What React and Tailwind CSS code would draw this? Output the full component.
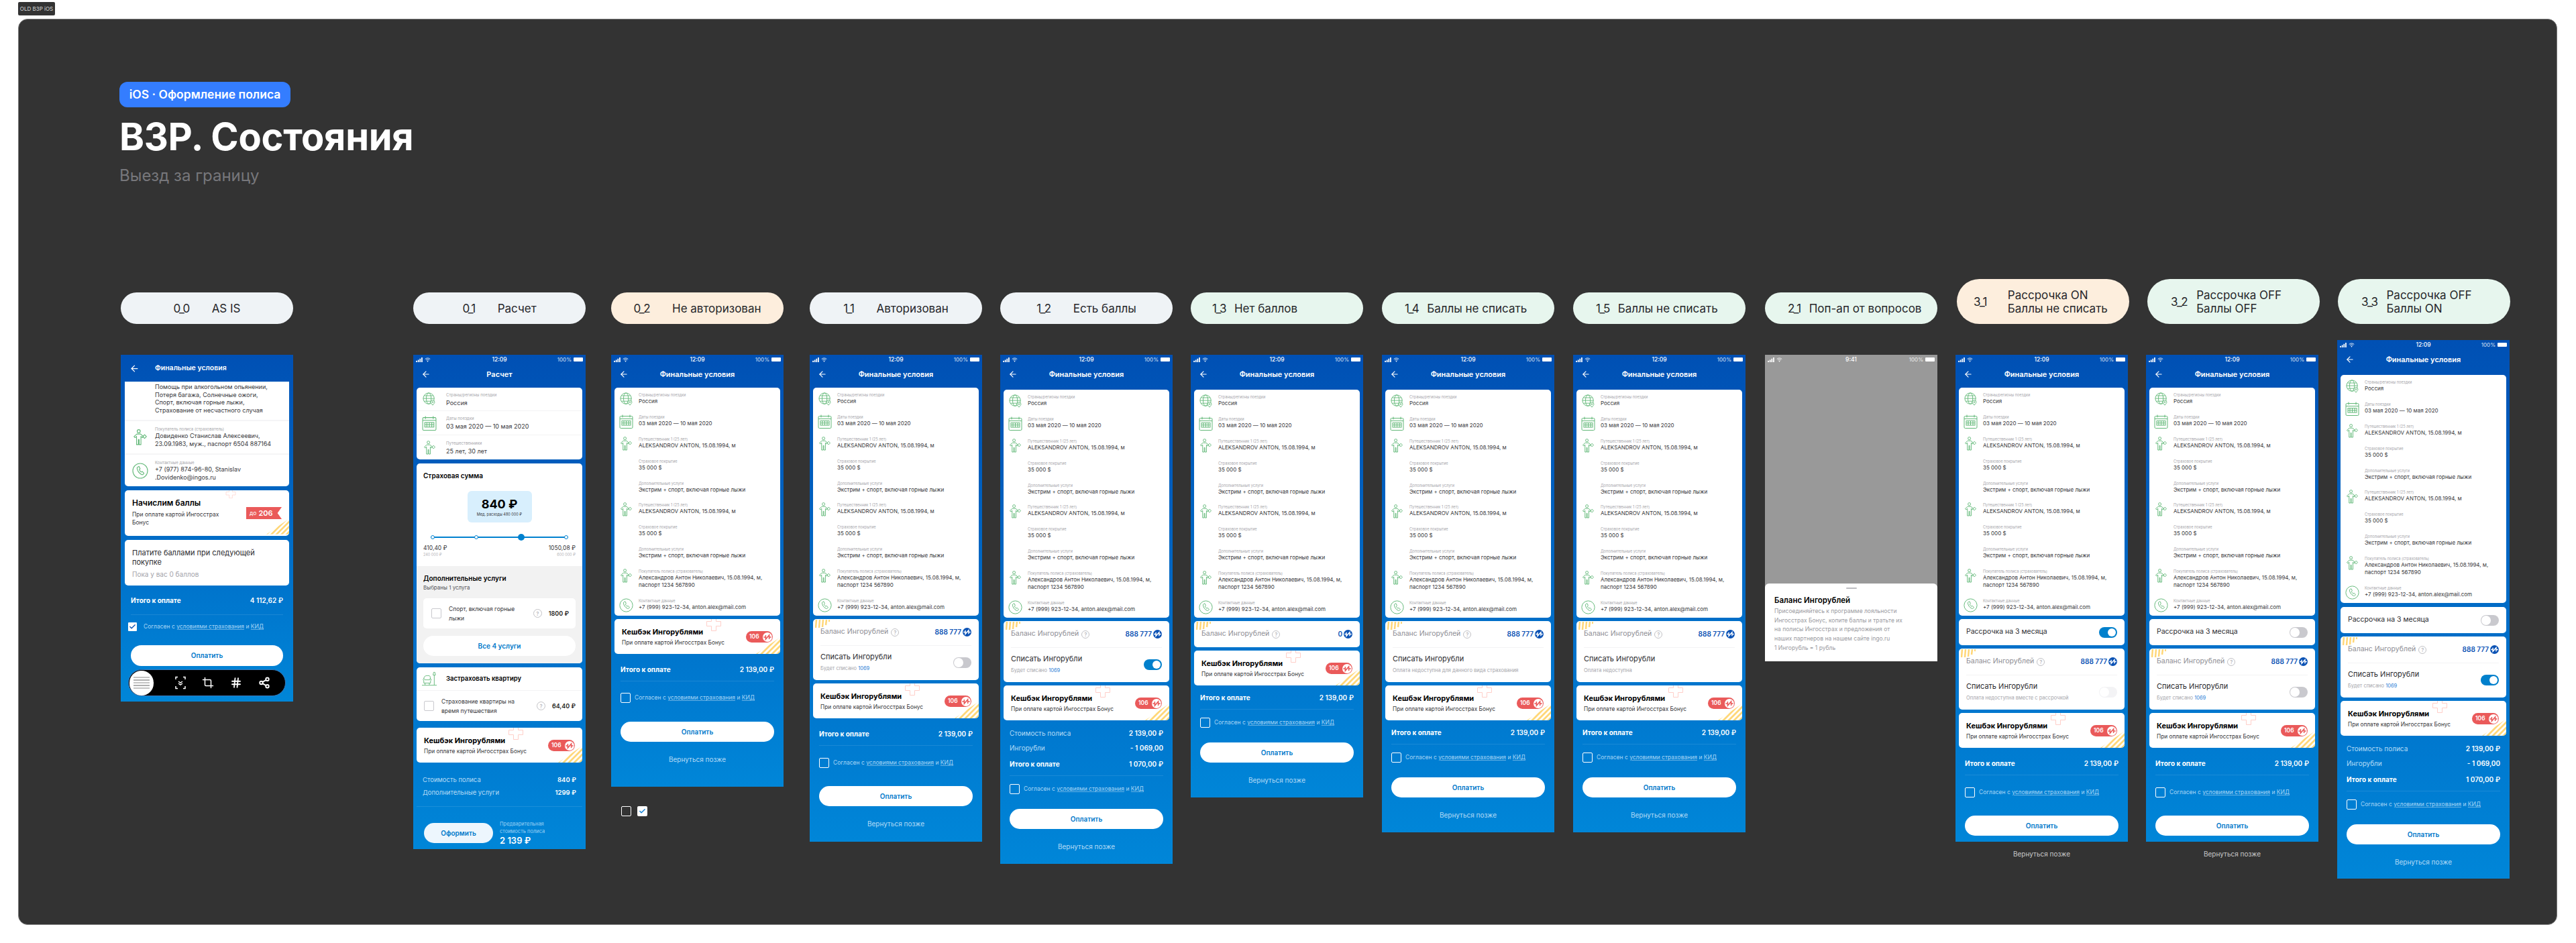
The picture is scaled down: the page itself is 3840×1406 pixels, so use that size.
import { useId } from 'react';
import { ArrowLeft, Check, Crop, Hash, Share2 } from 'lucide-react';

const traveller = [
  { label: 'Путешественник 1 (25 лет)', value: 'ALEKSANDROV ANTON, 15.08.1994, м', icon: 'person' },
  { label: 'Страховое покрытие', value: '35 000 $' },
  { label: 'Дополнительные услуги', value: 'Экстрим + спорт, включая горные лыжи' },
];

const detailRows = [
  { label: 'Страны/регионы поездки', value: 'Россия', icon: 'globe' },
  { label: 'Даты поездки', value: '03 мая 2020 — 10 мая 2020', icon: 'calendar' },
  ...traveller,
  ...traveller,
];

function GlobeIcon({ className }) {
  return (
    <svg viewBox="0 0 22 22" fill="none" stroke="#62b878" strokeWidth="1" className={className}>
      <circle cx="10" cy="10" r="9" />
      <ellipse cx="10" cy="10" rx="4" ry="9" />
      <path d="M1 10h18M2.5 5.5h15M2.5 14.5h11" />
      <path d="M16.5 21c-2-2.2-3.2-3.6-3.2-5a3.2 3.2 0 0 1 6.4 0c0 1.4-1.2 2.8-3.2 5z" fill="#fff" />
      <circle cx="16.5" cy="16" r="1" />
    </svg>
  );
}

function CalendarIcon({ className }) {
  return (
    <svg viewBox="0 0 20 21" fill="none" stroke="#62b878" strokeWidth="1" className={className}>
      <rect x="0.5" y="2.5" width="19" height="18" rx="1.5" />
      <path d="M4.5 0.5v4M15.5 0.5v4M0.5 6.5h19" />
      <rect x="3.5" y="9.5" width="13" height="6.5" />
      <path d="M6.5 9.5v6.5M10 9.5v6.5M13.5 9.5v6.5M3.5 12.7h13" />
    </svg>
  );
}

function PersonIcon({ className }) {
  return (
    <svg viewBox="0 0 20 22" fill="none" stroke="#62b878" strokeWidth="1" strokeLinejoin="round" className={className}>
      <circle cx="8" cy="2.700" r="2.100" />
      <path d="M5.500 6.500H10.500L14.500 10L13 11.500L11 9.700V21H8.500V14H7.500V21H5V9.700L3 11.500L1.500 10Z" />
      <path d="M16 7.500L18.500 10L16 12.500L13.500 10Z" />
    </svg>
  );
}

function PhoneIcon({ className }) {
  return (
    <svg viewBox="0 0 24 24" fill="none" stroke="#62b878" strokeWidth="1.1" className={className}>
      <circle cx="12" cy="12" r="11" />
      <path d="M8.5 6.2l1.7-.7 1.7 3.4-1.2 1.2c.5 1.6 1.4 2.8 3 3.8l1.3-1 2.6 2.6-1.2 1.6c-.6.7-1.6.8-2.5.3-3.6-1.9-6-5-6.6-9.200-.1-.9.4-1.700 1.200-2z" />
    </svg>
  );
}

function ChairIcon({ className }) {
  return (
    <svg viewBox="0 0 24 24" fill="none" stroke="#62b878" strokeWidth="1" className={className}>
      <path d="M3 12c0-3 2-5 5-5h3c1.500 0 2.500 1 2.500 2.500V13M3 12c-1.500.5-1.500 2.500 0 3v4h11v-4c1.500-.5 1.500-2.500 0-3-1 0-1.500.8-1.500 1.800H4.500C4.500 12.800 4 12 3 12zM0 22.500h24M5 19v3M12 19v3" />
      <path d="M18 6l1-4.500h2L22 6h-4zM20 6v16.500" />
    </svg>
  );
}

function RowIcon({ name }) {
  if (name === 'globe') return <GlobeIcon className="ml-[8px] h-[20px] w-[20px]" />;
  if (name === 'calendar') return <CalendarIcon className="ml-[7px] h-[21px] w-[21px]" />;
  if (name === 'person') return <PersonIcon className="ml-[8px] h-[21px] w-[19px]" />;
  if (name === 'phone') return <PhoneIcon className="ml-[7px] h-[21px] w-[21px]" />;
  return null;
}

function RubleCoin({ bg, fg, className }) {
  return (
    <svg viewBox="0 0 16 16" className={className}>
      <circle cx="8" cy="8" r="8" fill={bg} />
      <path d="M1.500 8H5V4.500V11.500L11 4.500V11.500V8H14.500" fill="none" stroke={fg} strokeWidth="1.800" />
    </svg>
  );
}

function HelpMark({ className }) {
  return (
    <span className={`flex shrink-0 items-center justify-center rounded-full border border-[#c2c2c6] text-[#a9a9ae] ${className}`}>?</span>
  );
}

function StatusBar({ time = '12:09' }) {
  return (
    <div className="grid h-[14px] grid-cols-3 items-center px-[4px] text-white">
      <div className="flex items-center gap-[3px]">
        <svg viewBox="0 0 11 8" className="h-[7px] w-[10px]" fill="currentColor">
          <rect x="0" y="5.500" width="2" height="2.500" />
          <rect x="3" y="4" width="2" height="4" />
          <rect x="6" y="2" width="2" height="6" />
          <rect x="9" y="0" width="2" height="8" />
        </svg>
        <svg viewBox="0 0 12 9" className="h-[7px] w-[9px]" fill="none" stroke="currentColor" strokeWidth="1.200">
          <path d="M1 3c3-2.600 7-2.600 10 0M2.800 5c2-1.600 4.400-1.600 6.400 0" />
          <circle cx="6" cy="7.300" r="0.700" fill="currentColor" />
        </svg>
      </div>
      <div className="text-center text-[8.5px] font-medium leading-none">{time}</div>
      <div className="flex items-center justify-end gap-[3px] text-[8px] leading-none text-white/80">
        100%
        <span className="h-[6px] w-[14px] rounded-[1px] bg-white" />
      </div>
    </div>
  );
}

function Header({ title, className = 'h-[49px]' }) {
  return (
    <div className={`shrink-0 ${className}`}>
      <StatusBar />
      <div className="flex h-[30px] items-center pl-[12px] pr-[26px]">
        <ArrowLeft className="h-[14px] w-[14px] text-white" strokeWidth={2} />
        <div className="flex-1 text-center text-[11px] font-semibold leading-none text-white">{title}</div>
      </div>
    </div>
  );
}

function Card({ className = '', children }) {
  return <div className={`relative mx-[5px] overflow-hidden rounded-[5px] bg-white ${className}`}>{children}</div>;
}

function DetailRow({ label, value, icon, className = 'h-[32.9px]' }) {
  return (
    <div className={`flex ${className}`}>
      <div className="w-[36px] shrink-0">
        <RowIcon name={icon} />
      </div>
      <div className="min-w-0">
        <div className="text-[5.6px] leading-[8px] text-[#a6a6ab]">{label}</div>
        {value.map ? (
          value.map((line) => (
            <div key={line} className="whitespace-nowrap text-[8px] leading-[11px] text-[#37373b]">{line}</div>
          ))
        ) : (
          <div className="whitespace-nowrap text-[8px] leading-[11px] text-[#37373b]">{value}</div>
        )}
      </div>
    </div>
  );
}

function DetailsCard() {
  return (
    <Card className="h-[340px] pt-[7px]">
      {detailRows.map((row, i) => (
        <DetailRow key={i} {...row} />
      ))}
      <DetailRow
        label="Покупатель полиса (страхователь)"
        value={['Александров Антон Николаевич, 15.08.1994, м,', 'паспорт 1234 567890']}
        icon="person"
        className="h-[43.5px]"
      />
      <DetailRow label="Контактные данные" value="+7 (999) 923-12-34, anton.alex@mail.com" icon="phone" />
    </Card>
  );
}

function CornerStripes({ className }) {
  const id = useId();
  return (
    <svg viewBox="0 0 36 25" className={className}>
      <clipPath id={id}>
        <polygon points="36,0 36,25 0,25" />
      </clipPath>
      <g clipPath={`url(#${id})`} stroke="#ffd778" strokeWidth="2.800">
        <path d="M-2 27L28 -3M6 27L36 -3M14 27L44 -3M22 27L52 -3M30 27L60 -3" />
      </g>
    </svg>
  );
}

function PinkCross({ className }) {
  return (
    <svg viewBox="0 0 22 18" fill="none" stroke="#ffcfc9" strokeWidth="1" className={className}>
      <path d="M7.500 0V3.500H0.500V10.500H7.500V17.500H14.500V10.500H21.500V3.500H14.500V0" />
    </svg>
  );
}

function CashbackCard() {
  return (
    <Card className="mt-[5px] h-[52px] pl-[11px]">
      <PinkCross className="absolute left-[137px] top-0 h-[18px] w-[22px]" />
      <CornerStripes className="absolute bottom-0 right-0 h-[25px] w-[36px]" />
      <div className="pt-[13px] text-[11px] font-bold leading-[12px] text-black">Кешбэк Ингорублями</div>
      <div className="mt-[5px] text-[8.300px] leading-[10px] text-[#37373b]">При оплате картой Ингосстрах Бонус</div>
      <div className="absolute right-[11px] top-[18px] flex h-[17px] w-[40px] items-center justify-between rounded-full bg-[#ea5a5a] pl-[5px] pr-[1.500px] text-[8.5px] font-semibold text-white">
        106
        <RubleCoin bg="#ffffff" fg="#ea5a5a" className="h-[14px] w-[14px]" />
      </div>
    </Card>
  );
}

function Toggle({ state }) {
  if (state === 'on') {
    return (
      <div className="flex h-[16px] w-[27px] justify-end rounded-full bg-[#0080cc] p-[2px]">
        <span className="h-[12px] w-[12px] rounded-full bg-white" />
      </div>
    );
  }
  if (state === 'off') {
    return (
      <div className="flex h-[16px] w-[27px] rounded-full bg-[#c9c9ce] p-[1px]">
        <span className="h-[14px] w-[14px] rounded-full bg-white" />
      </div>
    );
  }
  return (
    <div className="flex h-[16px] w-[27px] rounded-full bg-[#f3f3f5] p-[1px]">
      <span className="h-[14px] w-[14px] rounded-full bg-white" />
    </div>
  );
}

function BalanceRow({ amount }) {
  return (
    <div className="flex h-[39px] items-center justify-between">
      <div className="flex items-center gap-[4px]">
        <span className="text-[10.5px] leading-none text-[#8e8e94]">Баланс Ингорублей</span>
        <HelpMark className="h-[12px] w-[12px] text-[8px]" />
      </div>
      <div className="flex items-center gap-[2px] text-[10px] font-semibold text-[#0b52b4]">
        {amount}
        <RubleCoin bg="#0b52b4" fg="#ffffff" className="h-[13px] w-[13px]" />
      </div>
    </div>
  );
}

function BalanceCard({ amount = '888 777', sub, toggle, titleClass = 'text-[#2c2c30]', className = 'mt-[5px]' }) {
  return (
    <Card className={`${className} px-[11px]`}>
      <svg viewBox="0 0 22 12" fill="none" stroke="#ffd778" strokeWidth="2.500" className="absolute left-[3px] top-[1px] h-[12px] w-[22px]">
        <path d="M2 0L1 12M7 0L6 12M12 0L11 11M17 0L16 8M21.500 0L21 3" />
      </svg>
      <BalanceRow amount={amount} />
      {sub ? (
        <div className="flex h-[52px] items-center justify-between border-t border-[#f3f3f4] pb-[2px]">
          <div>
            <div className={`text-[11px] leading-[13px] ${titleClass}`}>Списать Ингорубли</div>
            <div className="mt-[6px] whitespace-nowrap text-[7.5px] leading-[10px] text-[#a4a4aa]">{sub}</div>
          </div>
          {toggle ? <Toggle state={toggle} /> : null}
        </div>
      ) : null}
    </Card>
  );
}

const spend = (
  <>
    Будет списано <span className="text-[#2f7fd6]">1069</span>
  </>
);

function InstallmentCard({ on, className }) {
  return (
    <Card className={`flex h-[39px] items-center justify-between px-[11px] ${className}`}>
      <span className="text-[10.5px] leading-none text-[#2c2c30]">Рассрочка на 3 месяца</span>
      <Toggle state={on ? 'on' : 'off'} />
    </Card>
  );
}

function TotalRow({ label, value, className = '', strong }) {
  return (
    <div className={`flex h-[12px] items-center justify-between leading-none ${className}`}>
      <span className={strong ? 'text-[10px] font-bold text-white' : 'text-[10px] text-[#b5dbf6]'}>{label}</span>
      <span className="text-[10px] font-semibold text-white">{value}</span>
    </div>
  );
}

function AgreeText() {
  return (
    <span className="whitespace-nowrap text-[8.500px] leading-none text-[#a9d6f6]">
      Согласен с <span className="underline decoration-white/40">условиями страхования</span> и{' '}
      <span className="underline decoration-white/40">КИД</span>
    </span>
  );
}

function Agree() {
  return (
    <div className="flex items-center gap-[6px]">
      <span className="h-[15px] w-[15px] shrink-0 rounded-[2px] border-[1.500px] border-white" />
      <AgreeText />
    </div>
  );
}

function Foot({ top, breakdown, checkMt, btnMt, back = true, backClass = 'mt-[20px] pb-[19px]', endClass = '' }) {
  return (
    <div className={`px-[14px] ${top} ${endClass}`}>
      {breakdown ? (
        <>
          <TotalRow label="Стоимость полиса" value="2 139,00 ₽" />
          <TotalRow label="Ингорубли" value="- 1 069,00" className="mt-[10px]" />
          <TotalRow label="Итого к оплате" value="1 070,00 ₽" className="mt-[12px]" strong />
        </>
      ) : (
        <TotalRow label="Итого к оплате" value="2 139,00 ₽" strong />
      )}
      <div className="mt-[11px] h-px bg-white/10" />
      <div className={checkMt}>
        <Agree />
      </div>
      <div className={`flex h-[30px] items-center justify-center rounded-full bg-white text-[10px] font-semibold text-[#0079ca] ${btnMt}`}>
        Оплатить
      </div>
      {back ? (
        <div className={`text-center text-[10px] leading-[12px] text-[#b5dbf6] ${backClass}`}>Вернуться позже</div>
      ) : null}
    </div>
  );
}

function Screen({ children, className = '' }) {
  return <div className={`flex w-[257px] flex-col bg-linear-to-b from-[#0050b4] to-[#0086d8] ${className}`}>{children}</div>;
}

function OutsideBack() {
  return <div className="mt-[12px] text-center text-[10px] leading-[12px] text-[#c9c9c9]">Вернуться позже</div>;
}

function AsIs() {
  return (
    <Screen className="h-[517px]">
      <div className="flex h-[40px] items-center pl-[13px]">
        <ArrowLeft className="h-[15px] w-[15px] text-white" strokeWidth={2} />
        <div className="ml-[23px] text-[10.5px] font-semibold text-white">Финальные условия</div>
      </div>
      <div className="mx-[6px] rounded-b-[5px] bg-white">
        <div className="border-b-2 border-[#f5f5f6] pb-[9px] pl-[45px] pt-[2px] text-[9px] leading-[11.500px] text-[#37373b]">
          <div>Помощь при алкогольном опьянении,</div>
          <div>Потеря багажа, Солнечные ожоги,</div>
          <div>Спорт, включая горные лыжи,</div>
          <div>Страхование от несчастного случая</div>
        </div>
        <div className="flex border-b-2 border-[#f5f5f6] pb-[9px] pt-[8px]">
          <div className="flex w-[45px] shrink-0 items-center justify-center">
            <PersonIcon className="h-[24px] w-[22px]" />
          </div>
          <div>
            <div className="text-[6px] leading-[8px] text-[#a6a6ab]">Покупатель полиса (страхователь)</div>
            <div className="text-[9px] leading-[11.500px] text-[#37373b]">Довиденко Станислав Алексеевич,</div>
            <div className="text-[9px] leading-[11.500px] text-[#37373b]">23.09.1983, муж., паспорт 6504 887164</div>
          </div>
        </div>
        <div className="flex pb-[8px] pt-[8px]">
          <div className="flex w-[45px] shrink-0 items-center justify-center">
            <PhoneIcon className="h-[24px] w-[24px]" />
          </div>
          <div>
            <div className="text-[6px] leading-[8px] text-[#a6a6ab]">Контактные данные</div>
            <div className="text-[9px] leading-[11.500px] text-[#37373b]">+7 (977) 874-96-80, Stanislav</div>
            <div className="text-[9px] leading-[11.500px] text-[#37373b]">.Dovidenko@ingos.ru</div>
          </div>
        </div>
      </div>
      <div className="relative mx-[6px] mt-[6px] h-[68px] overflow-hidden rounded-[5px] bg-white pl-[11px] pt-[12px]">
        <PinkCross className="absolute left-[148px] top-0 h-[12px] w-[20px]" />
        <CornerStripes className="absolute bottom-0 right-0 h-[28px] w-[34px]" />
        <div className="text-[12px] font-semibold leading-[14px] text-black">Начислим баллы</div>
        <div className="mt-[4px] text-[8.500px] leading-[12px] text-[#37373b]">При оплате картой Ингосстрах</div>
        <div className="text-[8.500px] leading-[12px] text-[#37373b]">Бонус</div>
        <div className="absolute left-[181px] top-[25px] flex h-[18px] w-[53px] items-center gap-[3px] bg-[#ea5a5a] pl-[5px] text-white [clip-path:polygon(0_0,100%_0,88%_50%,100%_100%,0_100%)]">
          <span className="text-[8.500px]">до</span>
          <span className="text-[11px] font-semibold">206</span>
        </div>
      </div>
      <div className="mx-[6px] mt-[6px] h-[68px] rounded-[5px] bg-white pl-[11px] pt-[12px]">
        <div className="text-[11px] leading-[14px] text-[#2c2c30]">Платите баллами при следующей</div>
        <div className="text-[11px] leading-[14px] text-[#2c2c30]">покупке</div>
        <div className="mt-[5px] text-[10px] leading-[12px] text-[#a4a4aa]">Пока у вас 0 баллов</div>
      </div>
      <div className="px-[15px] pt-[16px]">
        <TotalRow label="Итого к оплате" value="4 112,62 ₽" strong />
        <div className="mt-[15px] h-px bg-white/10" />
        <div className="-ml-[4px] mt-[11px] flex items-center gap-[10px]">
          <span className="flex h-[13px] w-[13px] items-center justify-center rounded-[1px] bg-white">
            <Check className="h-[11px] w-[11px] text-[#0b52b4]" strokeWidth={3} />
          </span>
          <AgreeText />
        </div>
        <div className="mt-[21px] flex h-[31px] items-center justify-center rounded-full bg-white text-[10px] font-semibold text-[#0079ca]">
          Оплатить
        </div>
      </div>
      <div className="mx-[11px] mt-[5px] flex h-[40px] items-center justify-between rounded-full border border-[#3a78b8] bg-black pl-[1px] pr-[22px] text-white">
        <div className="flex h-[37px] w-[36px] flex-col justify-center gap-[2px] rounded-full bg-white px-[6px]">
          <span className="h-[2px] bg-[#c4c4c4]" />
          <span className="h-[2px] bg-[#b0b0b0]" />
          <span className="h-[2px] bg-[#c4c4c4]" />
          <span className="h-[2px] bg-[#b0b0b0]" />
          <span className="h-[2px] bg-[#c4c4c4]" />
        </div>
        <svg viewBox="0 0 16 20" fill="none" stroke="currentColor" strokeWidth="1.500" className="ml-[8px] h-[20px] w-[16px]">
          <path d="M1 5V1.500h3M12 1.500h3V5M1 15v3.500h3M12 18.500h3V15M5 8l3 2 3-2M5 11l3 2 3-2" />
        </svg>
        <Crop className="h-[20px] w-[18px]" strokeWidth={2} />
        <Hash className="h-[20px] w-[18px]" strokeWidth={2.500} />
        <Share2 className="h-[18px] w-[18px]" strokeWidth={2.500} />
      </div>
    </Screen>
  );
}

function CalcRow({ label, value, icon, className }) {
  return (
    <div className={`flex items-center ${className}`}>
      <div className="flex w-[44px] shrink-0 justify-center pr-[6px]">{icon}</div>
      <div>
        <div className="text-[6px] leading-[8px] text-[#a6a6ab]">{label}</div>
        <div className="mt-[2px] text-[9px] leading-[11px] text-[#37373b]">{value}</div>
      </div>
    </div>
  );
}

function SliderDot() {
  return <span className="h-[6px] w-[6px] rounded-full border-[1.500px] border-[#0081cf] bg-white" />;
}

function Calc() {
  return (
    <Screen className="h-[737px]">
      <Header title="Расчет" />
      <Card>
        <CalcRow label="Страны/регионы поездки" value="Россия" icon={<GlobeIcon className="h-[20px] w-[20px]" />} className="h-[35px] border-b border-[#f3f3f4]" />
        <CalcRow label="Даты поездки" value="03 мая 2020 — 10 мая 2020" icon={<CalendarIcon className="h-[22px] w-[22px]" />} className="h-[36px] border-b border-[#f3f3f4]" />
        <CalcRow label="Путешественники" value="25 лет, 30 лет" icon={<PersonIcon className="h-[21px] w-[19px]" />} className="h-[36px]" />
      </Card>
      <Card className="mt-[6px]">
        <div className="h-[153px] px-[10px] pt-[12px]">
          <div className="text-[10px] font-semibold leading-[12px] text-black">Страховая сумма</div>
          <div className="mx-auto mt-[17px] flex h-[47px] w-[96px] flex-col items-center justify-center rounded-[6px] bg-[#d8effd]">
            <div className="text-[18px] font-bold leading-[22px] text-black">840 ₽</div>
            <div className="text-[5.500px] leading-[8px] text-[#37373b]">Мед. расходы 480 000 ₽</div>
          </div>
          <div className="relative mx-[11px] mt-[17px] flex h-[10px] items-center justify-between">
            <div className="absolute inset-x-0 top-[4px] h-[2px] bg-[#0081cf]" />
            <span className="relative flex"><SliderDot /></span>
            <span className="relative flex"><SliderDot /></span>
            <span className="relative h-[10px] w-[10px] rounded-full bg-[#0081cf]" />
            <span className="relative flex"><SliderDot /></span>
          </div>
          <div className="mt-[6px] flex justify-between text-[8.500px] leading-[10px] text-[#37373b]">
            <span>410,40 ₽</span>
            <span>1050,08 ₽</span>
          </div>
          <div className="mt-px flex justify-between text-[5.500px] leading-[8px] text-[#b4b4b8]">
            <span>240 000 ₽</span>
            <span>600 000 ₽</span>
          </div>
        </div>
        <div className="bg-[#f2f2f2] px-[10px] pb-[11px] pt-[12px]">
          <div className="text-[10px] font-semibold leading-[12px] text-black">Дополнительные услуги</div>
          <div className="mt-[3px] text-[8px] leading-[10px] text-[#55555a]">Выбраны 1 услуга</div>
          <div className="mt-[11px] flex h-[45px] items-center rounded-[5px] bg-white pl-[12px] pr-[10px]">
            <span className="h-[15px] w-[15px] shrink-0 rounded-[2px] border border-[#c9c9ce]" />
            <span className="ml-[11px] w-[116px] text-[8.500px] leading-[14px] text-[#37373b]">Спорт, включая горные лыжи</span>
            <HelpMark className="ml-auto h-[13px] w-[13px] text-[8px]" />
            <span className="ml-[10px] whitespace-nowrap text-[9px] font-semibold text-[#1f1f22]">1800 ₽</span>
          </div>
          <div className="mt-[11px] flex h-[30px] items-center justify-center rounded-full bg-white text-[10px] font-semibold text-[#0079ca]">
            Все 4 услуги
          </div>
        </div>
      </Card>
      <Card className="mt-[6px]">
        <div className="flex h-[35px] items-center border-b border-[#f3f3f4]">
          <div className="flex w-[44px] shrink-0 justify-center pr-[6px]">
            <ChairIcon className="h-[22px] w-[22px]" />
          </div>
          <span className="text-[9.500px] font-semibold text-black">Застраховать квартиру</span>
        </div>
        <div className="flex h-[45px] items-center pl-[11px] pr-[10px]">
          <span className="h-[15px] w-[15px] shrink-0 rounded-[2px] border border-[#c9c9ce]" />
          <span className="ml-[11px] w-[112px] text-[8.500px] leading-[14px] text-[#37373b]">Страхование квартиры на время путешествия</span>
          <HelpMark className="ml-auto h-[13px] w-[13px] text-[8px]" />
          <span className="ml-[10px] whitespace-nowrap text-[9px] font-semibold text-[#1f1f22]">64,40 ₽</span>
        </div>
      </Card>
      <div className="-mt-px pt-[6px]">
        <CashbackCard />
      </div>
      <div className="px-[14px] pt-[20px]">
        <div className="flex h-[12px] items-center justify-between text-[9.500px] leading-none">
          <span className="text-[#b5dbf6]">Стоимость полиса</span>
          <span className="font-semibold text-white">840 ₽</span>
        </div>
        <div className="mt-[7px] flex h-[12px] items-center justify-between text-[9.500px] leading-none">
          <span className="text-[#b5dbf6]">Дополнительные услуги</span>
          <span className="font-semibold text-white">1299 ₽</span>
        </div>
      </div>
      <div className="mx-[5px] mt-[14px] h-px bg-white/10" />
      <div className="flex items-center px-[16px] pt-[20px]">
        <div className="flex h-[30px] w-[103px] items-center justify-center rounded-full bg-[#edf6fd] text-[10px] font-semibold text-[#0079ca]">
          Оформить
        </div>
        <div className="ml-[10px]">
          <div className="whitespace-nowrap text-[7.500px] leading-[11px] text-[#9bd0f5]">Предварительная</div>
          <div className="whitespace-nowrap text-[7.500px] leading-[11px] text-[#9bd0f5]">стоимость полиса</div>
          <div className="text-[13px] font-semibold leading-[16px] text-white">2 139 ₽</div>
        </div>
      </div>
    </Screen>
  );
}

function Popup() {
  return (
    <div className="flex h-[457px] w-[257px] flex-col bg-[#999999]">
      <StatusBar time="9:41" />
      <div className="mt-auto h-[116px] rounded-t-[6px] bg-white px-[14px]">
        <div className="mx-auto mt-[6px] h-[2px] w-[16px] rounded-full bg-[#bdbdc2]" />
        <div className="mt-[9px] text-[11.500px] font-semibold leading-[16px] text-black">Баланс Ингорублей</div>
        <div className="mt-[2px] text-[8.500px] leading-[13.700px] text-[#9a9aa0]">
          <div className="whitespace-nowrap">Присоединяйтесь к программе лояльности</div>
          <div className="whitespace-nowrap">Ингосстрах Бонус, копите баллы и тратьте их</div>
          <div className="whitespace-nowrap">на полисы Ингосстрах и предложения от</div>
          <div className="whitespace-nowrap">наших партнеров на нашем сайте ingo.ru</div>
          <div className="whitespace-nowrap">1 Ингорубль = 1 рубль</div>
        </div>
      </div>
    </div>
  );
}

function Pill({ id, lines, tone, className }) {
  return (
    <div className={`flex w-[257px] items-center rounded-full text-[17px] leading-[20px] text-[#26262a] ${tone} ${className}`}>
      <span className="tracking-[-1.500px]">{id}</span>
      <div className="whitespace-nowrap">
        {lines.map((line) => (
          <div key={line}>{line}</div>
        ))}
      </div>
    </div>
  );
}

const GRAY = 'bg-[#eff3f6]';
const ORANGE = 'bg-[#fdeedd]';
const GREEN = 'bg-[#e7f6ee]';

const finalFoot = {
  loose: { top: 'pt-[17px]', checkMt: 'mt-[18px]', btnMt: 'mt-[27px]' },
  tight: { top: 'pt-[12px]', checkMt: 'mt-[12px]', btnMt: 'mt-[22px]' },
  full: { top: 'pt-[13px]', breakdown: true, checkMt: 'mt-[12px]', btnMt: 'mt-[22px]' },
};

const HEAD_TALL = 'h-[52px]';

const columns = [
  {
    id: '0_0',
    lines: ['AS IS'],
    tone: GRAY,
    col: 'ml-[152px] pt-[20px]',
    pill: 'h-[47px] justify-center gap-[34px]',
    shot: 'mt-[46px]',
    body: <AsIs />,
  },
  {
    id: '0_1',
    lines: ['Расчет'],
    tone: GRAY,
    col: 'ml-[179px] pt-[20px]',
    pill: 'h-[47px] justify-center gap-[34px]',
    shot: 'mt-[46px]',
    body: <Calc />,
  },
  {
    id: '0_2',
    lines: ['Не авторизован'],
    tone: ORANGE,
    col: 'ml-[38px] pt-[20px]',
    pill: 'h-[47px] justify-center gap-[34px]',
    shot: 'mt-[46px]',
    body: (
      <>
        <Screen className="h-[644px]">
          <Header title="Финальные условия" />
          <DetailsCard />
          <CashbackCard />
          <Foot top="pt-[17px]" checkMt="mt-[17px]" btnMt="mt-[28px]" backClass="mt-[20px] pb-[34px]" />
        </Screen>
        <div className="ml-[15px] mt-[29px] flex items-center gap-[9px]">
          <span className="h-[15px] w-[15px] rounded-[2px] border-[1.500px] border-white" />
          <span className="flex h-[15px] w-[15px] items-center justify-center rounded-[2px] bg-white">
            <Check className="h-[11px] w-[11px] text-[#0b7fd6]" strokeWidth={3} />
          </span>
        </div>
      </>
    ),
  },
  {
    id: '1_1',
    lines: ['Авторизован'],
    tone: GRAY,
    col: 'ml-[39px] pt-[20px]',
    pill: 'h-[47px] justify-center gap-[34px]',
    shot: 'mt-[46px]',
    body: (
      <Screen className="h-[726px]">
        <Header title="Финальные условия" />
        <DetailsCard />
        <BalanceCard sub={spend} toggle="off" />
        <CashbackCard />
        <Foot {...finalFoot.loose} />
      </Screen>
    ),
  },
  {
    id: '1_2',
    lines: ['Есть баллы'],
    tone: GRAY,
    col: 'ml-[27px] pt-[20px]',
    pill: 'h-[47px] justify-center gap-[34px]',
    shot: 'mt-[46px]',
    body: (
      <Screen className="h-[759px]">
        <Header title="Финальные условия" className={HEAD_TALL} />
        <DetailsCard />
        <BalanceCard sub={spend} toggle="on" />
        <CashbackCard />
        <Foot {...finalFoot.full} />
      </Screen>
    ),
  },
  {
    id: '1_3',
    lines: ['Нет баллов'],
    tone: GREEN,
    col: 'ml-[27px] pt-[20px]',
    pill: 'h-[47px] justify-start gap-[13px] pl-[32px]',
    shot: 'mt-[46px]',
    body: (
      <Screen className="h-[660px]">
        <Header title="Финальные условия" className={HEAD_TALL} />
        <DetailsCard />
        <BalanceCard amount="0" />
        <CashbackCard />
        <Foot {...finalFoot.tight} />
      </Screen>
    ),
  },
  {
    id: '1_4',
    lines: ['Баллы не списать'],
    tone: GREEN,
    col: 'ml-[28px] pt-[20px]',
    pill: 'h-[47px] justify-start gap-[13px] pl-[34px]',
    shot: 'mt-[46px]',
    body: (
      <Screen className="h-[712px]">
        <Header title="Финальные условия" className={HEAD_TALL} />
        <DetailsCard />
        <BalanceCard sub="Оплата недоступна для данного вида страхования" />
        <CashbackCard />
        <Foot {...finalFoot.tight} />
      </Screen>
    ),
  },
  {
    id: '1_5',
    lines: ['Баллы не списать'],
    tone: GREEN,
    col: 'ml-[28px] pt-[20px]',
    pill: 'h-[47px] justify-start gap-[13px] pl-[34px]',
    shot: 'mt-[46px]',
    body: (
      <Screen className="h-[712px]">
        <Header title="Финальные условия" className={HEAD_TALL} />
        <DetailsCard />
        <BalanceCard sub="Оплата недоступна" />
        <CashbackCard />
        <Foot {...finalFoot.tight} />
      </Screen>
    ),
  },
  {
    id: '2_1',
    lines: ['Поп-ап от вопросов'],
    tone: GREEN,
    col: 'ml-[29px] pt-[20px]',
    pill: 'h-[47px] justify-start gap-[13px] pl-[34px]',
    shot: 'mt-[46px]',
    body: <Popup />,
  },
  {
    id: '3_1',
    lines: ['Рассрочка ON', 'Баллы не списать'],
    tone: ORANGE,
    col: 'ml-[27px]',
    pill: 'ml-[2px] h-[67px] justify-start gap-[32px] pl-[25px]',
    shot: 'mt-[46px]',
    body: (
      <>
        <Screen className="h-[726px]">
          <Header title="Финальные условия" />
          <DetailsCard />
          <InstallmentCard on className="mt-[5px]" />
          <BalanceCard sub="Оплата недоступна вместе с рассрочкой" toggle="disabled" />
          <CashbackCard />
          <Foot {...finalFoot.loose} back={false} />
        </Screen>
        <OutsideBack />
      </>
    ),
  },
  {
    id: '3_2',
    lines: ['Рассрочка OFF', 'Баллы OFF'],
    tone: GREEN,
    col: 'ml-[27px]',
    pill: 'ml-[2px] h-[67px] justify-start gap-[14px] pl-[35px]',
    shot: 'mt-[46px]',
    body: (
      <>
        <Screen className="h-[726px]">
          <Header title="Финальные условия" />
          <DetailsCard />
          <InstallmentCard className="mt-[5px]" />
          <BalanceCard sub={spend} toggle="off" />
          <CashbackCard />
          <Foot {...finalFoot.loose} back={false} />
        </Screen>
        <OutsideBack />
      </>
    ),
  },
  {
    id: '3_3',
    lines: ['Рассрочка OFF', 'Баллы ON'],
    tone: GREEN,
    col: 'ml-[28px]',
    pill: 'ml-px h-[67px] justify-start gap-[14px] pl-[35px]',
    shot: 'mt-[24px]',
    body: (
      <Screen className="h-[803px]">
        <Header title="Финальные условия" className="h-[52px]" />
        <DetailsCard />
        <InstallmentCard className="mt-[6px]" />
        <BalanceCard sub={spend} toggle="on" />
        <CashbackCard />
        <Foot {...finalFoot.full} />
      </Screen>
    ),
  },
];

export default function App() {
  return (
    <div className="h-[1406px] w-[3840px] overflow-hidden bg-white pl-[27px] pt-[3px] font-['Inter','Noto_Sans',sans-serif]">
      <div className="flex h-[20px] w-[55px] items-center justify-center rounded-[2px] bg-[#333333] text-[8px] text-[#d8d8d8]">OLD ВЗР iOS</div>
      <div className="mt-[5px] h-[1351px] w-[3785px] rounded-[14px] border border-[#7a7a7a] bg-[#333333] pt-[93px]">
        <div className="pl-[150px]">
          <div className="flex h-[38px] w-[255px] items-center justify-center rounded-[12px] bg-[#347dff] text-[17.500px] font-semibold text-white">
            iOS · Оформление полиса
          </div>
          <div className="mt-[17px] text-[56px] font-bold leading-[54px] tracking-[-0.300px] text-white">ВЗР. Состояния</div>
          <div className="mt-[17px] text-[24px] leading-[28px] text-[#77777b]">Выезд за границу</div>
        </div>
        <div className="mt-[140px] flex items-start">
          {columns.map((c) => (
            <div key={c.id} className={`w-[257px] shrink-0 ${c.col}`}>
              <Pill id={c.id} lines={c.lines} tone={c.tone} className={c.pill} />
              <div className={c.shot}>{c.body}</div>
            </div>
          ))}
        </div>
      </div>
    </div>
  );
}
